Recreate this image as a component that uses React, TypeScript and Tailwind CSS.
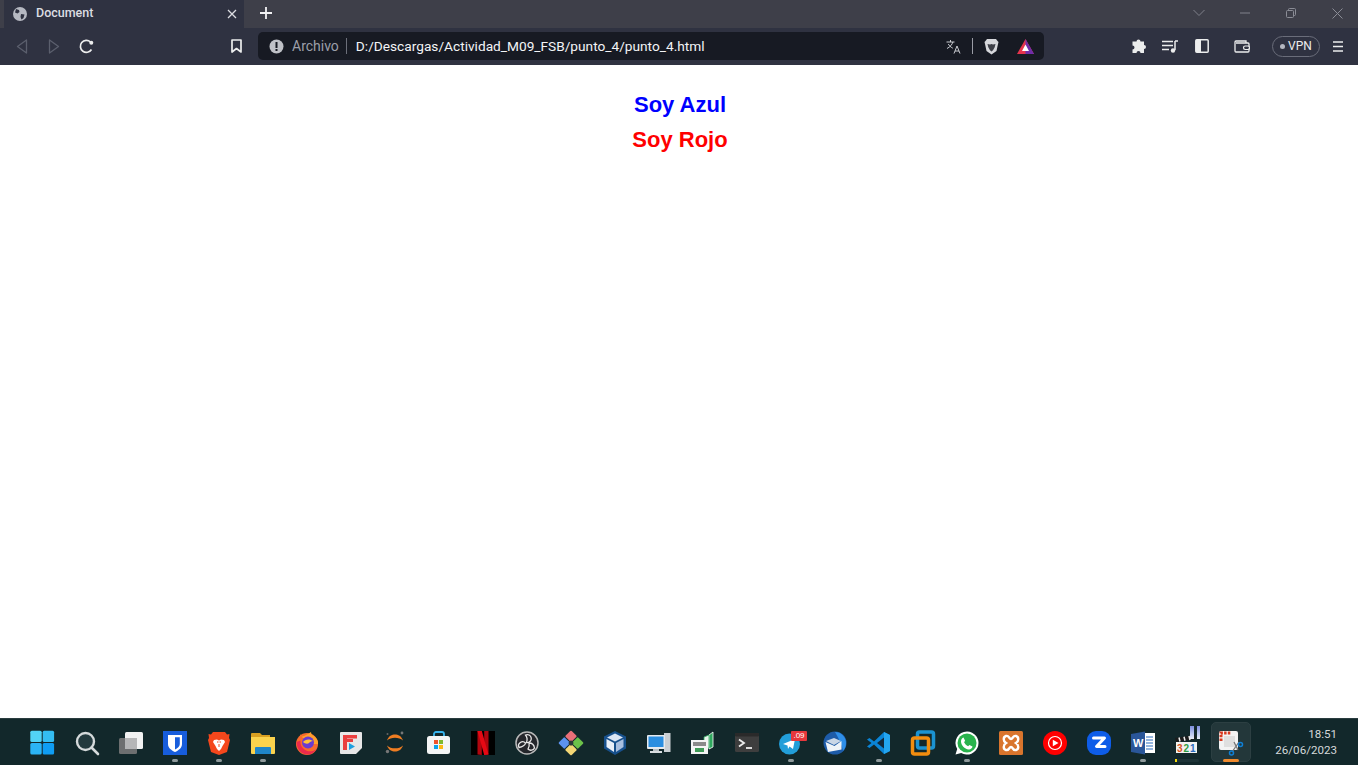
import React from 'react';

const Btn = ({ children, className = '' }: { children: React.ReactNode; className?: string }) => (
  <div className={`w-8 h-8 flex items-center justify-center shrink-0 ${className}`}>{children}</div>
);

const Ico = ({ children }: { children: React.ReactNode }) => (
  <svg width="24" height="24" viewBox="0 0 24 24" className="block overflow-visible">{children}</svg>
);

const Slot = ({ children, dot, active, progress }: { children: React.ReactNode; dot?: boolean; active?: boolean; progress?: boolean }) => (
  <div className="relative w-11 h-full shrink-0">
    {active && <div className="absolute left-[2px] right-[2px] top-[3px] bottom-[3px] bg-[#23373a] rounded-[5px] border border-[#2c3f42]" />}
    <div className="relative flex flex-col items-center pt-3">
      {children}
      {dot && <div className="w-[6px] h-[3px] mt-1 rounded-full bg-[#8f9a9c]" />}
      {active && <div className="w-[16px] h-[3px] mt-1 rounded-full bg-[#f08a2e]" />}
      {progress && <div className="w-6 h-[3px] mt-1 rounded-full bg-[#1d3337]"><div className="w-[2px] h-full bg-[#f5d90a]" /></div>}
    </div>
  </div>
);

const taskIcons: { icon: React.ReactNode; dot?: boolean; active?: boolean; progress?: boolean }[] = [
  // windows
  { icon: <Ico><g transform="translate(-.7 -.3)"><rect x="0" y="0" width="11.4" height="11.4" rx="1.5" fill="#52d3f6" /><rect x="12.4" y="0" width="11.4" height="11.4" rx="1.5" fill="#34bdf2" /><rect x="0" y="12.4" width="11.4" height="11.4" rx="1.5" fill="#2bb4f5" /><rect x="12.4" y="12.4" width="11.4" height="11.4" rx="1.5" fill="#0f9df3" /></g></Ico> },
  // search
  { icon: <Ico><circle cx="10.5" cy="10.5" r="8.5" fill="#233a3e" stroke="#d5dadb" strokeWidth="2.4" /><path d="M16.5 16.5 23 23" stroke="#d5dadb" strokeWidth="2.6" strokeLinecap="round" /></Ico> },
  // task view
  { icon: <Ico><rect x="6" y="1" width="18" height="17" rx="1.5" fill="#f1f2f2" /><rect x="0" y="7" width="18" height="16" rx="1.5" fill="#6d6f70" /><rect x="6" y="7" width="12" height="11" fill="#b5b6b7" /></Ico> },
  // bitwarden
  { icon: <Ico><rect width="24" height="24" fill="#175ddc" /><path d="M5 4h14v9c0 4-3.600 6.500-7 8-3.400-1.500-7-4-7-8z" fill="#fff" /><path d="M12 6.200h4.800V13c0 2.600-2.400 4.300-4.800 5.500z" fill="#175ddc" /></Ico>, dot: true },
  // brave
  { icon: <Ico><path d="M6 1h12l2 2.500L22.500 3 22 7l1 2-3 12-8 3-8-3L1 9l1-2-.5-4L4 3.500z" fill="#f4471c" /><path d="M7 9l3-.5 2 1 2-1 3 .5 1 2-2.500 4-1.500 3-2 2-2-2-1.500-3L6 11z" fill="#fff" /><path d="M10 11h1.500M12.500 11H14M12 13v3" stroke="#f4471c" strokeWidth="1" /></Ico>, dot: true },
  // explorer
  { icon: <Ico><path d="M0 3a1 1 0 0 1 1-1h8l2 2h8v4H0z" fill="#d9a021" /><path d="M0 6h24v16a1 1 0 0 1-1 1H1a1 1 0 0 1-1-1z" fill="#fbd34d" /><path d="M4 17a1 1 0 0 1 1-1h14a1 1 0 0 1 1 1v6H4z" fill="#1f86c9" /></Ico>, dot: true },
  // firefox
  { icon: <Ico><circle cx="12" cy="13" r="11" fill="#f86a2c" /><path d="M5 3c0 2 2 3 4 2 3-1 5-3 7-4 0 2 1 3 3 4 3 2 4.500 5 4 8H12z" fill="#ffa02b" /><circle cx="13" cy="11.500" r="6" fill="#6a3bd0" /><path d="M8 11c2-3 7-3.500 10-1-2 0-3 1-4 2s-4 1-6-1z" fill="#ffc23a" /><path d="M1.500 11c0 7 5 12.500 11 12.500 4 0 7-2 9-5.500-3 2.500-8 3.500-12 .5-3-2-4.500-5-4-9z" fill="#ec2a4c" /></Ico> },
  // flipboard-like
  { icon: <Ico><path d="M1 2a1 1 0 0 1 1-1h20a1 1 0 0 1 1 1v15l-6 6H2a1 1 0 0 1-1-1z" fill="#e7e7e7" /><path d="M4 4h14v3.500H8V19H4z" fill="#ea3f3f" /><path d="M8 8h6v3H8z" fill="#ea3f3f" /><path d="M10 12l6 3.500-6 3.500z" fill="#1d9fe0" /></Ico> },
  // jupyter
  { icon: <Ico><path d="M4 9.500C5.500 5 9 3.500 12 3.500S18.500 5 20 9.500C18 7.500 15 6.700 12 6.700S6 7.500 4 9.500z" fill="#ef7d22" /><path d="M4 14.500c1.500 4.500 5 6 8 6s6.500-1.500 8-6c-2 2-5 2.800-8 2.800s-6-.8-8-2.800z" fill="#ef7d22" /><circle cx="19" cy="2" r="1.400" fill="#777" /><circle cx="4.500" cy="20.500" r="1.700" fill="#777" /><circle cx="4.500" cy="3" r="1" fill="#666" /></Ico> },
  // store
  { icon: <Ico><path d="M7 6V3a2 2 0 0 1 2-2h6a2 2 0 0 1 2 2v3" fill="none" stroke="#37b4ee" strokeWidth="1.800" /><rect y="5" width="23" height="18" rx="2.500" fill="#f4f5f5" /><rect x="7" y="9" width="4" height="4" fill="#f0532a" /><rect x="12" y="9" width="4" height="4" fill="#7fba2e" /><rect x="7" y="14" width="4" height="4" fill="#0ea3ec" /><rect x="12" y="14" width="4" height="4" fill="#fcb813" /></Ico> },
  // netflix
  { icon: <Ico><rect width="24" height="24" fill="#000" /><path d="M6.500 0h4.300v24l-4.300-.6z" fill="#b1060f" /><path d="M13.200 0h4.300v23.400l-4.300.6z" fill="#b1060f" /><path d="M6.500 0h4.300l6.700 23.400-4.300.6z" fill="#e50914" /></Ico> },
  // obs
  { icon: <Ico><circle cx="12" cy="12" r="11" fill="#24262b" stroke="#b9b9b9" strokeWidth="1.500" /><path d="M10.500 4a4 4 0 1 1 1 7.500c1-2.500.5-5.500-1-7.500z" fill="none" stroke="#e8e8e8" strokeWidth="1.300" /><path d="M4 16.500a4 4 0 0 1 6.500-4.500c-.2 1.800-3 4-6.500 4.500z" fill="none" stroke="#e8e8e8" strokeWidth="1.300" /><path d="M19.500 17a4 4 0 0 1-6.500 1c1.200-1.800 1.500-4 1-6 2.600 0 5 2 5.500 5z" fill="none" stroke="#e8e8e8" strokeWidth="1.300" /></Ico> },
  // kite diamond
  { icon: <Ico><g transform="rotate(45 12 12)"><rect x="3" y="3" width="8.500" height="8.500" rx="1" fill="#ea6f78" /><rect x="12.500" y="3" width="8.500" height="8.500" rx="1" fill="#6cc24a" /><rect x="3" y="12.500" width="8.500" height="8.500" rx="1" fill="#5c93ee" /><rect x="12.500" y="12.500" width="8.500" height="8.500" rx="1" fill="#f4d775" /><circle cx="12" cy="12" r="2.400" fill="#2d3a3a" /></g></Ico> },
  // virtualbox
  { icon: <Ico><path d="M12 0l11 5.500v12L12 24 1 17.500v-12z" fill="#17508c" /><path d="M12 2.500l8 4-8 4-8-4z" fill="#dce6f5" /><path d="M3.500 8l7.500 4v9l-7.500-5z" fill="#e9eff8" /><path d="M20.500 8L13 12v9l7.500-5z" fill="#a9bfdf" /></Ico> },
  // network pc
  { icon: <Ico><rect x="17" y="2" width="6.500" height="19" fill="#c9cfd3" /><rect x="0" y="4" width="18" height="14" rx="1" fill="#e5eaee" /><rect x="1.500" y="5.500" width="15" height="10.500" fill="#2a8ee0" /><rect x="6" y="18" width="6" height="2" fill="#b8bfc4" /><rect x="3" y="20" width="12" height="2" fill="#d9dee1" /></Ico> },
  // stacked cards
  { icon: <Ico><path d="M18 4l4-3v15l-4 2z" fill="#2fa85e" stroke="#fff" strokeWidth=".8" /><path d="M13 6l5-2v13l-5 2z" fill="#e9f3ec" stroke="#2fa85e" strokeWidth=".8" /><rect x="0" y="9" width="17" height="14" fill="#f4f4f4" /><rect x="2" y="11" width="13" height="4" fill="#8a8a8a" /><rect x="4" y="17" width="9" height="4" fill="#3f9b58" /></Ico> },
  // terminal
  { icon: <Ico><rect y="2" width="24" height="19" rx="1.500" fill="#3e3e3e" /><rect y="2" width="24" height="3.500" rx="1" fill="#2a2a2a" /><path d="M4 8.500l5 3.500-5 3.500" fill="none" stroke="#eee" strokeWidth="1.800" /><path d="M11 17h6" stroke="#eee" strokeWidth="1.800" /></Ico> },
  // telegram
  { icon: <div className="relative w-6 h-6"><Ico><circle cx="10.500" cy="13" r="10.500" fill="#229ed9" /><path d="M4 13l12-5-2 10-3.500-2.500L9 18l-.5-3.500z" fill="#fff" /></Ico><div className="absolute top-0 left-[12px] w-[16px] h-[10px] rounded-[1px] bg-[#e6373c] text-white text-[8px] leading-[10px] text-center font-['Liberation_Sans',sans-serif]">.09</div></div>, dot: true },
  // thunderbird
  { icon: <Ico><circle cx="12" cy="12" r="11.500" fill="#1d5ba8" /><path d="M12 1a11 11 0 0 1 11 11c0 3-1 6-3 8-1-6-4-12-8-19z" fill="#2f8fe8" /><path d="M2.500 11l9 4 7-5v8.500L5 21z" fill="#eef3f8" /><path d="M3 10l8-3 7 3-7 4z" fill="#c9d6e6" /></Ico> },
  // vscode
  { icon: <Ico><path d="M17 1l6 3v16l-6 3-10-9.500L2.500 17 0 15.500 4.500 12 0 8.500 2.500 7 7 10.500z" fill="#0a84d6" /><path d="M17 6.500L10 12l7 5.500z" fill="#12283a" /><path d="M17 1l6 3v16l-6 3z" fill="#23a5f0" /></Ico>, dot: true },
  // virtualbox-like squares
  { icon: <Ico><rect x="6.500" y="1" width="16" height="16" rx="2" fill="none" stroke="#1b93d2" strokeWidth="3.500" /><rect x="1.500" y="7" width="16" height="16" rx="2" fill="none" stroke="#f28d0f" strokeWidth="3.500" /></Ico> },
  // whatsapp
  { icon: <Ico><path d="M12 .5a11.500 11.500 0 1 1-5.800 21.400L.5 23.500l1.700-5.600A11.500 11.500 0 0 1 12 .5z" fill="#fff" /><circle cx="12" cy="12" r="9.500" fill="#29b34d" /><path d="M8.500 6.500l1.600 3.300-1 1.400c1 2 2.300 3.200 4 4l1.400-1.100 3 1.500c-.3 2-2 3-3.900 2.800-4-.5-7.600-4.500-7.600-8 0-2 1-3.400 2.500-3.900z" fill="#fff" /></Ico>, dot: true },
  // xampp
  { icon: <Ico><rect width="24" height="24" rx="1.500" fill="#d9752d" /><path d="M7 5c3-1 3 3 5 3s2-4 5-3 3 5 0 7c3 2 3 6 0 7s-3-3-5-3-2 4-5 3-3-5 0-7c-3-2-3-6 0-7z" fill="none" stroke="#fff" strokeWidth="2.400" /></Ico> },
  // youtube music
  { icon: <Ico><circle cx="12" cy="12" r="12" fill="#f00" /><circle cx="12" cy="12" r="6.500" fill="none" stroke="#fff" strokeWidth="1.200" /><path d="M9.800 8.700L15.500 12l-5.700 3.300z" fill="#fff" /></Ico> },
  // zoom-like Z
  { icon: <Ico><rect width="24" height="24" rx="9" fill="#0e5de8" /><path d="M6.500 7h11l-8 8.500h8.500" fill="none" stroke="#fff" strokeWidth="3" strokeLinejoin="round" strokeLinecap="round" /></Ico> },
  // word
  { icon: <Ico><rect x="8" y="2" width="16" height="20" fill="#fff" /><path d="M15 6h7M15 9h7M15 12h7M15 15h7M15 18h7" stroke="#2b6cbf" strokeWidth="1.200" /><path d="M0 3l14-2.500v23L0 21z" fill="#2a5699" /><text x="2" y="16" fontSize="11" fontWeight="700" fill="#fff" fontFamily="'Liberation Sans',sans-serif">W</text></Ico>, dot: true },
  // clapper 321
  { icon: <div className="relative w-6 h-6"><Ico><rect x="1" y="11" width="21" height="11" fill="#f2f2f2" /><path d="M0 7l20-3 1 4L1 11z" fill="#1c1c1c" /><path d="M4 6.500l1 4M9 5.700l1 4M14 5l1 4" stroke="#eee" strokeWidth="1.500" /><text x="2" y="21" fontSize="10" fontWeight="700" fill="#d9541e" fontFamily="'Liberation Sans',sans-serif">3</text><text x="8.500" y="21" fontSize="10" fontWeight="700" fill="#2f9e44" fontFamily="'Liberation Sans',sans-serif">2</text><text x="15" y="21" fontSize="10" fontWeight="700" fill="#2b6cbf" fontFamily="'Liberation Sans',sans-serif">1</text></Ico><div className="absolute -top-[5px] left-[15px] w-[4px] h-[13px] bg-gradient-to-b from-[#7f8fe0] to-[#e8edf8]" /><div className="absolute -top-[5px] left-[22px] w-[3px] h-[13px] bg-gradient-to-b from-[#7f8fe0] to-[#e8edf8]" /></div>, progress: true },
  // snipping tool
  { icon: <Ico><rect x="0" y="0" width="19" height="19" rx="2" fill="#f3f3f3" /><path d="M2 10V2h10" fill="none" stroke="#d8391f" strokeWidth="3" strokeDasharray="2.500 1.200" /><rect x="5" y="5" width="11" height="11" fill="#dfdfdf" /><path d="M15 11l4 8M20 11l-7 10" stroke="#777" strokeWidth="1.300" /><circle cx="21.500" cy="13.500" r="2" fill="none" stroke="#0f7fd6" strokeWidth="1.500" /><circle cx="12.500" cy="22" r="2" fill="none" stroke="#0f7fd6" strokeWidth="1.500" /></Ico>, active: true },
];

export default function App() {
  return (
    <div className="w-[1358px] h-[765px] flex flex-col overflow-hidden bg-white font-['Liberation_Sans',sans-serif]">
      {/* tab strip */}
      <div className="h-7 bg-[#3e3f49] flex items-stretch pl-1 shrink-0 overflow-hidden">
        <div className="w-60 bg-[#2f3241] flex items-center pl-[9px] pr-[7px] pb-px font-['Roboto',sans-serif]">
          <svg width="14" height="14" viewBox="0 0 14 14" className="shrink-0">
            <circle cx="7" cy="7" r="7" fill="#b6b9c2" />
            <path d="M3 2l3 1 .5 2-2 1.500L2 5.500zM8 7l3.500.5-1 3.500-2 1.500L7.500 10z" fill="#2f3241" />
          </svg>
          <span className="ml-[9px] text-[12.5px] font-medium text-[#dcdde2] flex-1">Document</span>
          <svg width="10" height="10" viewBox="0 0 10 10"><path d="M1 1l8 8M9 1l-8 8" stroke="#dcdde2" strokeWidth="1.300" /></svg>
        </div>
        <div className="w-11 flex items-center justify-center pb-[2px]">
          <svg width="14" height="14" viewBox="0 0 14 14"><path d="M7 1v12M1 7h12" stroke="#f2f2f4" strokeWidth="1.800" /></svg>
        </div>
        <div className="flex-1" />
        <div className="flex items-center pb-[2px] -mr-[2px] shrink-0">
          <div className="w-[46px] flex justify-center">
            <svg width="12" height="8" viewBox="0 0 12 8"><path d="M.5 1l5.500 5.500L11.500 1" fill="none" stroke="#7e808a" /></svg>
          </div>
          <div className="w-[46px] flex justify-center">
            <svg width="10" height="2" viewBox="0 0 10 2"><path d="M0 1h10" stroke="#80828c" /></svg>
          </div>
          <div className="w-[46px] flex justify-center">
            <svg width="10" height="10" viewBox="0 0 10 10"><rect x=".5" y="2.500" width="7" height="7" rx="1" fill="none" stroke="#8b8d96" /><path d="M2.500 2.500V1.500a1 1 0 0 1 1-1h5a1 1 0 0 1 1 1v5a1 1 0 0 1-1 1h-1" fill="none" stroke="#8b8d96" /></svg>
          </div>
          <div className="w-[46px] flex justify-center">
            <svg width="11" height="11" viewBox="0 0 11 11"><path d="M.5.500l10 10M10.500.500l-10 10" stroke="#8b8d96" /></svg>
          </div>
        </div>
      </div>

      {/* toolbar */}
      <div className="h-[37px] bg-[#2f3241] flex items-center pl-[6px] pb-px shrink-0">
        <Btn><svg width="12" height="15" viewBox="0 0 12 15"><path d="M10.500 1v13L1.500 7.500z" fill="none" stroke="#5b5f6d" strokeWidth="1.300" strokeLinejoin="round" /></svg></Btn>
        <Btn><svg width="12" height="15" viewBox="0 0 12 15"><path d="M1.500 1v13l9-6.500z" fill="none" stroke="#5b5f6d" strokeWidth="1.300" strokeLinejoin="round" /></svg></Btn>
        <Btn>
          <svg width="15" height="15" viewBox="0 0 15 15"><path d="M12.500 10.500A6 6 0 1 1 11.500 3" fill="none" stroke="#eceded" strokeWidth="1.700" /><circle cx="12.300" cy="3.700" r="2" fill="#eceded" /></svg>
        </Btn>
        <Btn className="ml-[118px]">
          <svg width="11" height="14" viewBox="0 0 11 14"><path d="M1 1h9v12L5.500 9.500 1 13z" fill="none" stroke="#eceded" strokeWidth="1.700" strokeLinejoin="round" /></svg>
        </Btn>
        <div className="ml-[6px] w-[786px] h-7 rounded-[5px] bg-[#171a23] flex items-center pl-[11px] pr-[10px] font-['Roboto',sans-serif]">
          <svg width="15" height="15" viewBox="0 0 15 15" className="shrink-0"><circle cx="7.500" cy="7.500" r="7" fill="#bfc1c7" /><rect x="6.500" y="3" width="2" height="6" fill="#171a23" /><rect x="6.500" y="10" width="2" height="2" fill="#171a23" /></svg>
          <span className="ml-[8px] text-[14px] text-[#9c9fa9]">Archivo</span>
          <div className="ml-[7px] w-px h-4 bg-[#6c6f7a]" />
          <span className="ml-[9px] text-[13.7px] text-[#f3f4f6] flex-1">D:/Descargas/Actividad_M09_FSB/punto_4/punto_4.html</span>
          <svg width="15" height="15" viewBox="0 0 15 15" className="shrink-0"><path d="M.5 3h8M4.500 1v2M6.800 3c-.5 2.500-2.800 5-5.800 6.500M2.300 5c.8 1.500 2.200 3 4.500 4.200" fill="none" stroke="#c9cbd1" strokeWidth="1" /><path d="M8 14.500L11 7l3 7.500M9 12h4" fill="none" stroke="#c9cbd1" strokeWidth="1" /></svg>
          <div className="ml-[11px] w-px h-4 bg-[#9a9ca5]" />
          <svg width="15" height="17" viewBox="0 0 15 17" className="ml-[11px] shrink-0"><path d="M3 1h9l1.500 2 1 1-.5 2-1.500 7L7.500 16.500 2.500 13 1 6 .5 4l1-1z" fill="#d6d7db" /><path d="M3.500 6l2.500.5 1.500-.5 1.500.5 2.500-.5-.8 3.200-1.700 3L7.500 13.500 6 12.200l-1.700-3z" fill="#3d3f47" /></svg>
          <svg width="17" height="15" viewBox="0 0 17 15" className="ml-[18px] shrink-0"><path d="M8.500 0L17 15H0z" fill="#e5344c" /><path d="M8.500 0L17 15H8.500z" fill="#6f2da8" /><path d="M8.500 5.500L12 12H5z" fill="#fff" /></svg>
        </div>
        <Btn className="ml-[78px]">
          <svg width="15" height="15" viewBox="0 0 15 15"><path d="M5.500 2.500a2 2 0 0 1 4 0H13v3.500a2 2 0 0 1 0 4V14H9.500a2 2 0 0 0-4 0H1.500v-3.500a2 2 0 0 0 0-4V2.500z" fill="#eceded" /></svg>
        </Btn>
        <Btn>
          <svg width="16" height="13" viewBox="0 0 16 13"><path d="M0 1.500h11M0 5.500h11M0 9.500h7" stroke="#eceded" strokeWidth="1.500" /><path d="M13 1v9" stroke="#eceded" strokeWidth="1.500" /><path d="M13 1h3" stroke="#eceded" strokeWidth="1.500" /><circle cx="11" cy="10.500" r="2.200" fill="#eceded" /></svg>
        </Btn>
        <Btn>
          <svg width="14" height="14" viewBox="0 0 14 14"><rect x=".8" y=".8" width="12.400" height="12.400" rx="1" fill="none" stroke="#eceded" strokeWidth="1.500" /><rect x="1" y="1" width="5" height="12" fill="#eceded" /></svg>
        </Btn>
        <Btn className="ml-2">
          <svg width="16" height="13" viewBox="0 0 16 13"><path d="M2 3h12a1 1 0 0 1 1 1v7a1 1 0 0 1-1 1H2a1 1 0 0 1-1-1V2a1 1 0 0 1 1-1h10v2" fill="none" stroke="#eceded" strokeWidth="1.300" /><rect x="9.500" y="6" width="6" height="3.500" rx="1.700" fill="#2f3241" stroke="#eceded" strokeWidth="1.200" /></svg>
        </Btn>
        <div className="ml-[14px] w-12 h-[21px] rounded-full border border-[#6a6d7a] flex items-center justify-center gap-[3px] text-[12px] text-[#eceded] font-['Roboto',sans-serif]">
          <div className="w-[5px] h-[5px] rounded-full bg-[#b4b7c0]" />
          VPN
        </div>
        <Btn className="ml-[2px]">
          <svg width="10" height="11" viewBox="0 0 10 11"><path d="M0 1h10M0 5.500h10M0 10h10" stroke="#eceded" strokeWidth="1.500" /></svg>
        </Btn>
      </div>

      {/* page */}
      <div className="flex-1 flex flex-col items-center pl-[2px] pt-[22px] font-bold text-[22px] leading-[35px]">
        <div className="text-[#0000ff]">Soy Azul</div>
        <div className="text-[#ff0000]">Soy Rojo</div>
      </div>

      {/* taskbar */}
      <div className="h-[47px] bg-[#12282b] border-t border-[#2a3c3f] flex items-stretch pl-[21px] shrink-0">
        {taskIcons.map((t, i) => (
          <Slot key={i} dot={t.dot} active={t.active} progress={t.progress}>{t.icon}</Slot>
        ))}
        <div className="w-[84px] flex flex-col items-end pt-[7px] text-[11.6px] leading-[16px] text-[#d5d9da] font-['Roboto',sans-serif]">
          <div>18:51</div>
          <div>26/06/2023</div>
        </div>
      </div>
    </div>
  );
}
